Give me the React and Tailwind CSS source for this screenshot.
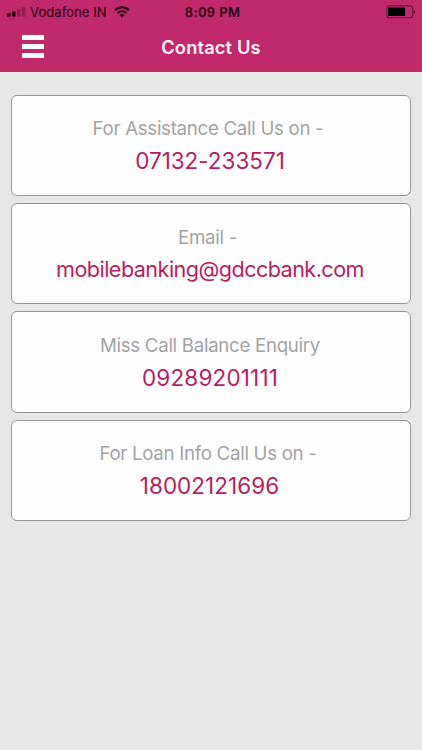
import React from "react";

const contacts = [
  { label: "For Assistance Call Us on -", value: "07132-233571", labelClass: "pr-[6px]", valueClass: "pr-[2px] text-[22.5px] tracking-[-0.03px]" },
  { label: "Email -", value: "mobilebanking@gdccbank.com", labelClass: "pr-[7px]", valueClass: "pr-[2px] text-[21.6px] tracking-[-0.55px]" },
  { label: "Miss Call Balance Enquiry", value: "09289201111", labelClass: "pr-[2px]", valueClass: "pr-[2px] text-[22.5px] tracking-[0.16px]" },
  { label: "For Loan Info Call Us on -", value: "18002121696", labelClass: "pr-[6px]", valueClass: "pr-[3px] text-[22.5px] tracking-[0.04px]" },
];

function Signal() {
  return (
    <svg width="19" height="10" viewBox="0 0 19 10" fill="#24000f">
      <rect x="0" y="6" width="3.6" height="3.6" rx="0.7" />
      <rect x="5" y="4.4" width="3.6" height="5.2" rx="0.7" />
      <rect x="10" y="2.4" width="3.6" height="7.2" rx="0.7" opacity="0.28" />
      <rect x="15" y="0.2" width="3.6" height="9.4" rx="0.7" opacity="0.28" />
    </svg>
  );
}

function Wifi() {
  return (
    <svg width="16" height="12" viewBox="0 0 16 12" fill="none" stroke="#24000f" strokeWidth="2">
      <path d="M0.9 4.2C5 0.2 11 0.2 15.1 4.2" />
      <path d="M3.6 7C6.2 4.6 9.8 4.6 12.4 7" />
      <path d="M5.6 9C7 7.8 9 7.8 10.4 9L8 11.4Z" fill="#24000f" stroke="none" />
    </svg>
  );
}

function Battery() {
  return (
    <svg width="30" height="14" viewBox="0 0 30 14">
      <rect x="0.7" y="0.9" width="26" height="11.8" rx="2.8" fill="none" stroke="#24000f" strokeOpacity="0.5" strokeWidth="1.1" />
      <rect x="2" y="2.6" width="17" height="8.4" rx="0.8" fill="#000" />
      <path d="M27.9 4.9C29.5 5.3 29.5 8.3 27.9 8.7Z" fill="#24000f" fillOpacity="0.7" />
    </svg>
  );
}

export default function App() {
  return (
    <div className="flex h-[750px] w-[422px] flex-col overflow-hidden bg-[#e7e7e7] font-['Inter',sans-serif]">
      <header className="h-[72px] shrink-0 bg-[#c02a6a]">
        <div className="grid h-6 grid-cols-[1fr_auto_1fr] items-center pr-[6px] pl-[7px] text-[13px] leading-6 text-[#24000f]">
          <div className="flex items-center">
            <Signal />
            <span className="ml-[4px] whitespace-nowrap tracking-[0.08px]">Vodafone IN</span>
            <span className="ml-[7px]"><Wifi /></span>
          </div>
          <span className="pl-[2px] font-semibold tracking-[0.35px]">8:09 PM</span>
          <div className="flex justify-end"><Battery /></div>
        </div>
        <div className="grid h-12 grid-cols-[1fr_auto_1fr] items-center">
          <button aria-label="Menu" className="ml-[22px] flex w-[22px] flex-col gap-[4px] pb-[3px]">
            <span className="h-[5px] w-full bg-white" />
            <span className="h-[5px] w-full bg-white" />
            <span className="h-[5px] w-full bg-white" />
          </button>
          <h1 className="pb-[2px] text-[18.3px] leading-6 font-semibold tracking-[0.15px] text-[#fff0f7]">Contact Us</h1>
        </div>
      </header>
      <main className="flex flex-col gap-[7px] px-[11px] pt-[22.7px]">
        {contacts.map((c) => (
          <section key={c.value} className="h-[101.4px] rounded-[6px] border border-[#959595] bg-[#fefefe] pt-[20.5px] text-center whitespace-nowrap">
            <p className={"text-[18.7px] leading-[26px] tracking-[-0.3px] text-[#a3a3a3] " + c.labelClass}>{c.label}</p>
            <p className={"mt-[3px] leading-[31px] text-[#b51f5f] " + c.valueClass}>{c.value}</p>
          </section>
        ))}
      </main>
    </div>
  );
}
